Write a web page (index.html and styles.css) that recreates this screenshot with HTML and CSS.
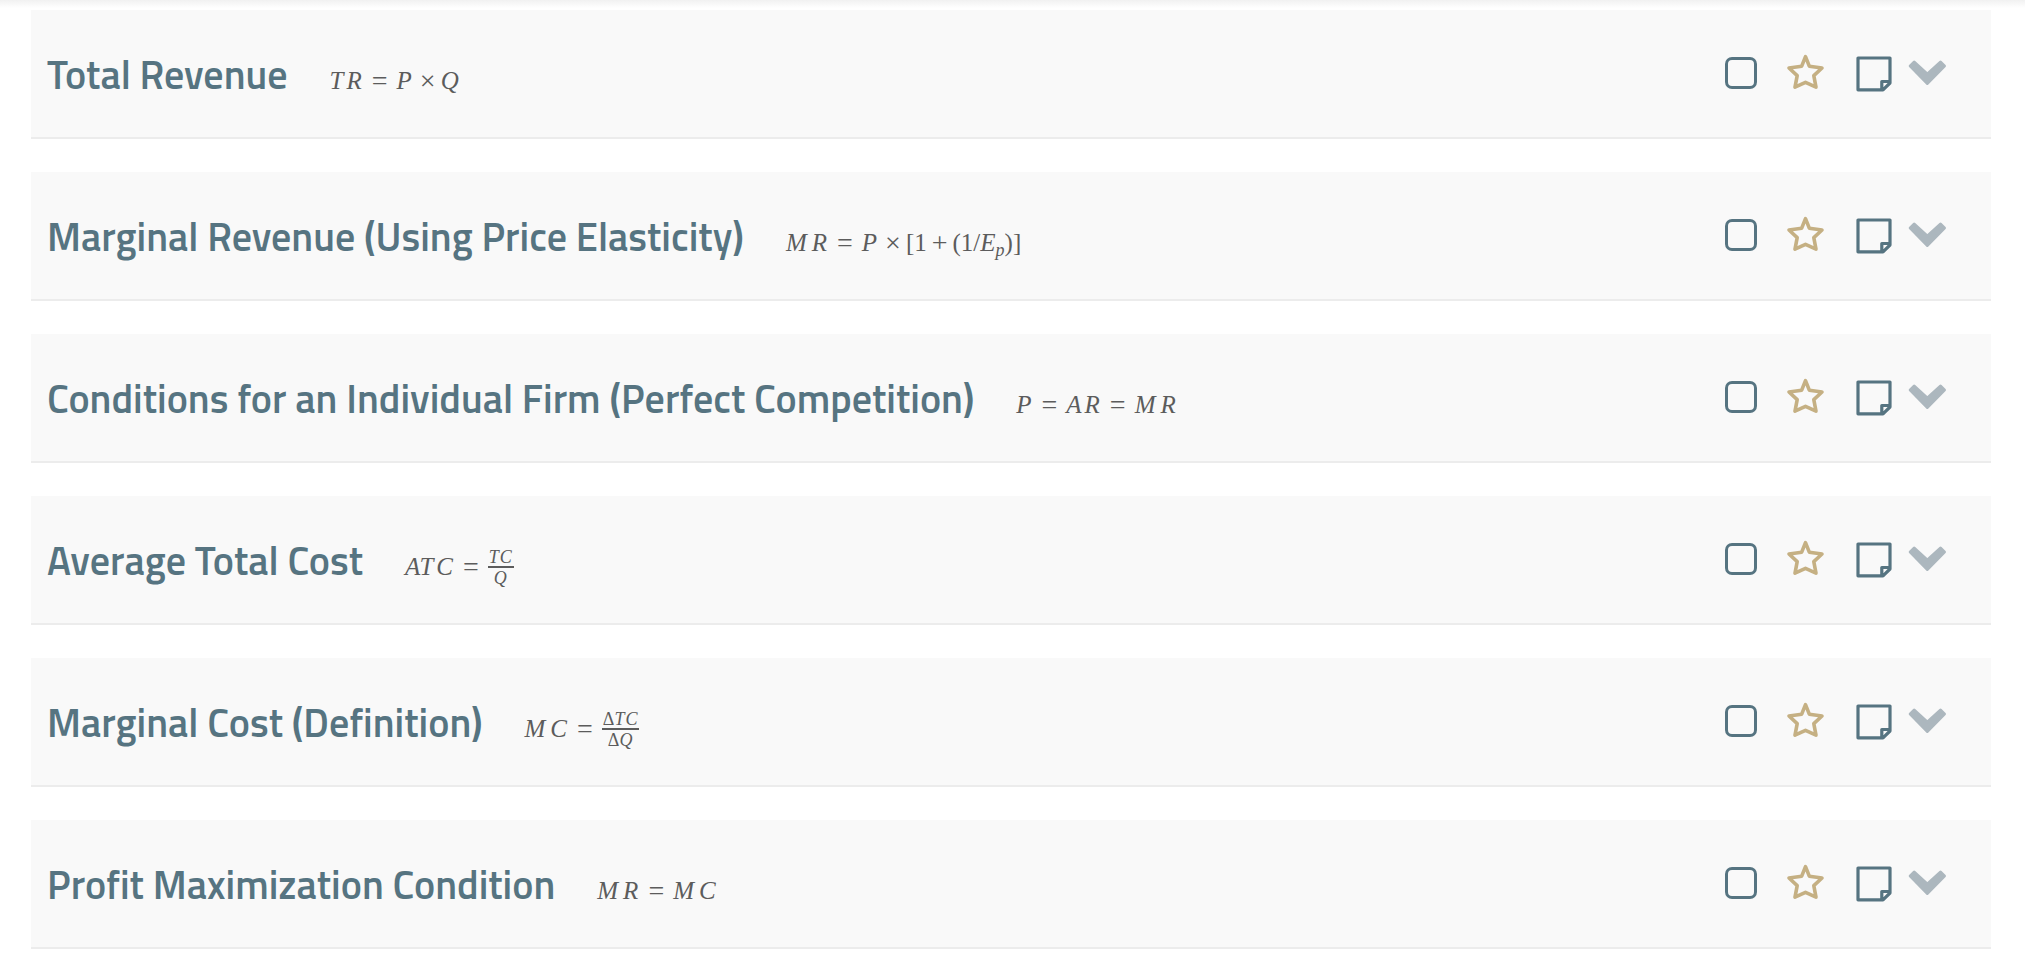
FILE: index.html
```html
<!DOCTYPE html>
<html lang="en">
<head>
<meta charset="utf-8">
<title>Formulas</title>
<link rel="stylesheet" href="styles.css">
</head>
<body>
<svg class="sprite" aria-hidden="true">
  <symbol id="star" viewBox="0 0 40 40">
    <path d="M19.5 3.6L23.3 13.2L36 15L27.8 22.6L30 34.2L19.5 29.4L9 34.2L11.2 22.6L3 15L15.7 13.2Z" fill="none" stroke="currentColor" stroke-width="3.6" stroke-linejoin="round"/>
  </symbol>
  <symbol id="note" viewBox="0 0 40 40">
    <path d="M4 5H36V30L29 36.8H4ZM36 28.5H27.8V36.8" fill="none" stroke="currentColor" stroke-width="3.2" stroke-linejoin="round"/>
  </symbol>
  <symbol id="chevron" viewBox="0 0 40 40">
    <path d="M2.2 13L6.2 9L19.3 21.2L32.5 9L36.5 13L19.3 30.5Z" fill="currentColor" stroke="currentColor" stroke-width="3" stroke-linejoin="round"/>
  </symbol>
</svg>
<div class="topbar"></div>
<main class="list">
  <article class="row">
    <h2 class="title">Total Revenue</h2>
    <div class="formula"><i>T</i><i>R</i><span class="rel">=</span><i>P</i><span class="bin">×</span><i>Q</i></div>
    <div class="actions">
      <input class="check" type="checkbox" aria-label="Mark Total Revenue">
      <button class="icon star" type="button" aria-label="Favorite"><svg><use href="#star"/></svg></button>
      <button class="icon note" type="button" aria-label="Note"><svg><use href="#note"/></svg></button>
      <button class="icon chevron" type="button" aria-label="Expand"><svg><use href="#chevron"/></svg></button>
    </div>
  </article>
  <article class="row">
    <h2 class="title">Marginal Revenue (Using Price Elasticity)</h2>
    <div class="formula"><i class="wide">M</i><i>R</i><span class="rel">=</span><i>P</i><span class="bin">×</span>[1<span class="bin">+</span>(1/<i class="base">E</i><sub>p</sub>)]</div>
    <div class="actions">
      <input class="check" type="checkbox" aria-label="Mark Marginal Revenue">
      <button class="icon star" type="button" aria-label="Favorite"><svg><use href="#star"/></svg></button>
      <button class="icon note" type="button" aria-label="Note"><svg><use href="#note"/></svg></button>
      <button class="icon chevron" type="button" aria-label="Expand"><svg><use href="#chevron"/></svg></button>
    </div>
  </article>
  <article class="row">
    <h2 class="title">Conditions for an Individual Firm (Perfect Competition)</h2>
    <div class="formula"><i>P</i><span class="rel">=</span><i>A</i><i>R</i><span class="rel">=</span><i class="wide">M</i><i>R</i></div>
    <div class="actions">
      <input class="check" type="checkbox" aria-label="Mark Conditions for an Individual Firm">
      <button class="icon star" type="button" aria-label="Favorite"><svg><use href="#star"/></svg></button>
      <button class="icon note" type="button" aria-label="Note"><svg><use href="#note"/></svg></button>
      <button class="icon chevron" type="button" aria-label="Expand"><svg><use href="#chevron"/></svg></button>
    </div>
  </article>
  <article class="row">
    <h2 class="title">Average Total Cost</h2>
    <div class="formula"><i class="base">A</i><i>T</i><i>C</i><span class="rel">=</span><span class="frac"><span class="num"><i>T</i><i>C</i></span><span class="den"><i>Q</i></span></span></div>
    <div class="actions">
      <input class="check" type="checkbox" aria-label="Mark Average Total Cost">
      <button class="icon star" type="button" aria-label="Favorite"><svg><use href="#star"/></svg></button>
      <button class="icon note" type="button" aria-label="Note"><svg><use href="#note"/></svg></button>
      <button class="icon chevron" type="button" aria-label="Expand"><svg><use href="#chevron"/></svg></button>
    </div>
  </article>
  <article class="row">
    <h2 class="title">Marginal Cost (Definition)</h2>
    <div class="formula"><i class="wide">M</i><i>C</i><span class="rel">=</span><span class="frac"><span class="num">Δ<i>T</i><i>C</i></span><span class="den">Δ<i>Q</i></span></span></div>
    <div class="actions">
      <input class="check" type="checkbox" aria-label="Mark Marginal Cost">
      <button class="icon star" type="button" aria-label="Favorite"><svg><use href="#star"/></svg></button>
      <button class="icon note" type="button" aria-label="Note"><svg><use href="#note"/></svg></button>
      <button class="icon chevron" type="button" aria-label="Expand"><svg><use href="#chevron"/></svg></button>
    </div>
  </article>
  <article class="row">
    <h2 class="title">Profit Maximization Condition</h2>
    <div class="formula"><i class="wide">M</i><i>R</i><span class="rel">=</span><i class="wide">M</i><i>C</i></div>
    <div class="actions">
      <input class="check" type="checkbox" aria-label="Mark Profit Maximization Condition">
      <button class="icon star" type="button" aria-label="Favorite"><svg><use href="#star"/></svg></button>
      <button class="icon note" type="button" aria-label="Note"><svg><use href="#note"/></svg></button>
      <button class="icon chevron" type="button" aria-label="Expand"><svg><use href="#chevron"/></svg></button>
    </div>
  </article>
</main>
</body>
</html>
```
FILE: styles.css
```css
* { box-sizing: border-box; }

body {
  margin: 0;
  background: #fff;
  font-family: "Titillium Web", Lato, sans-serif;
}

.sprite { display: none; }

.topbar {
  height: 10px;
  background: linear-gradient(#f1f1f1, #fff 8px);
}

.list {
  display: flex;
  flex-direction: column;
  gap: 33px;
  padding: 0 34px 22px 31px;
}

.row {
  display: flex;
  align-items: baseline;
  padding: 35px 43px 32px 16px;
  background: #f9f9f9;
  border-bottom: 2px solid #ececec;
}

.title {
  margin: 0;
  color: #567481;
  font-size: 40px;
  font-weight: 600;
  line-height: 60px;
}

.formula {
  margin-left: 42px;
  color: #5c5c5c;
  font: 25px/28px "STIXGeneral", "Liberation Serif", serif;
  white-space: nowrap;
}

.formula i { padding-right: 3px; }
.formula .wide { padding-right: 5px; }
.formula .base { padding-right: 0; }

.rel,
.bin {
  font-size: 28px;
  line-height: 1;
  vertical-align: -1px;
}

.rel { margin: 0 9px 0 7px; }
.bin { margin: 0 5px; }

.formula sub {
  font-size: 18px;
  font-style: italic;
  line-height: 1;
  vertical-align: -5px;
}

.frac {
  display: inline-flex;
  flex-direction: column;
  align-items: stretch;
  vertical-align: 12px;
  font-size: 18px;
  line-height: 18px;
  text-align: center;
}

.frac i { padding-right: 1px; }
.num { padding: 0 1px; border-bottom: 2px solid #5c5c5c; }
.den { padding-top: 1px; }

.actions {
  display: flex;
  align-self: center;
  align-items: center;
  margin: 0 0 5px auto;
}

.check {
  appearance: none;
  width: 32px;
  height: 32px;
  margin: 0;
  border: 3px solid #567481;
  border-radius: 7px;
}

.icon {
  display: block;
  width: 40px;
  height: 40px;
  padding: 0;
  border: 0;
  background: none;
}

.icon svg { display: block; width: 40px; height: 40px; }
.star { margin-left: 29px; color: #c5b083; }
.note { margin-left: 28px; color: #567481; }
.chevron { margin-left: 14px; color: #acb7be; }
```
